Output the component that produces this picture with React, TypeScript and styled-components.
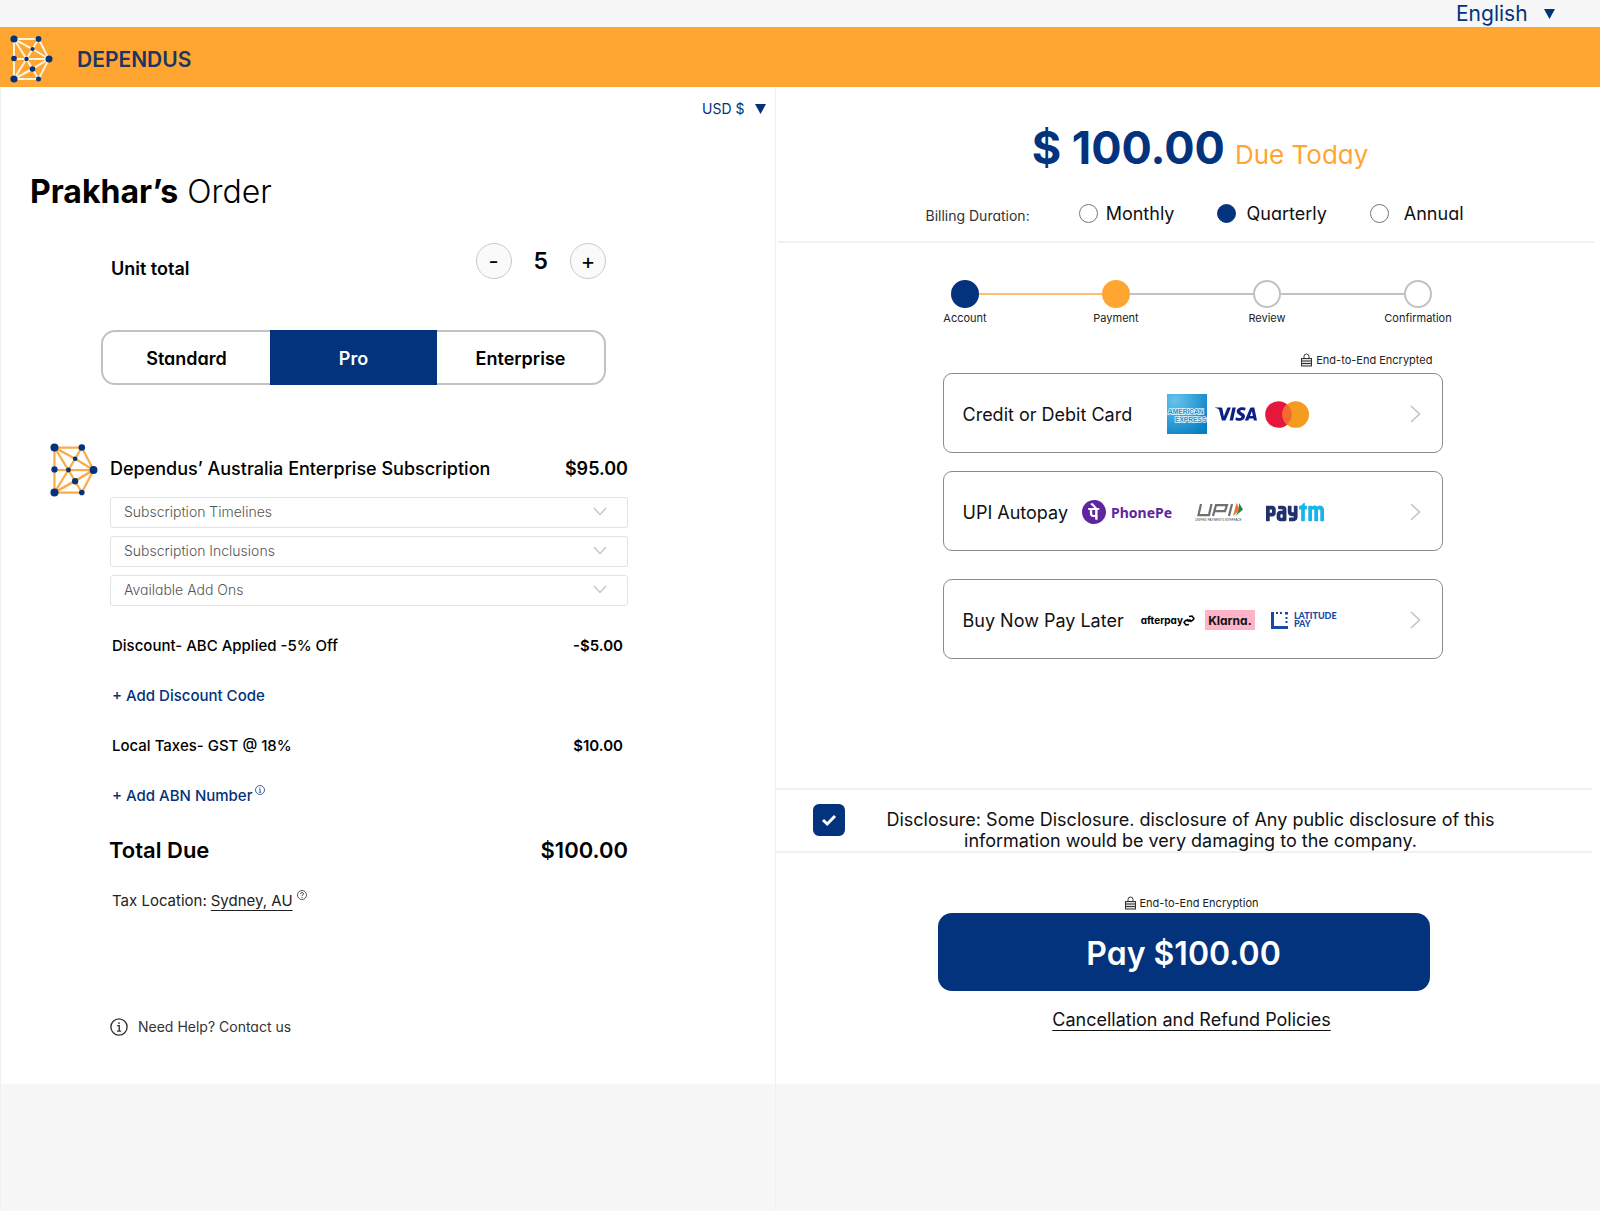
import React, { useState } from "react";
import styled, { createGlobalStyle, css } from "styled-components";
import { SiVisa, SiPaytm, SiPhonepe } from "react-icons/si";

const navy = "#03337c";
const orange = "#ffa632";
const line = "#f1f1f1";

const Global = createGlobalStyle`
  *, *::before, *::after { box-sizing: border-box; }
  body {
    margin: 0;
    background: #f7f7f7;
    color: #111;
    font-family: Inter, "Liberation Sans", sans-serif;
    font-size: 16px;
  }
  button, select, input { font: inherit; color: inherit; margin: 0; }
  button { cursor: pointer; }
  h1, h2, p, ol { margin: 0; padding: 0; }
`;

const alternateA = css`
  font-feature-settings: "cv11" 1;
`;

const UtilityBar = styled.div`
  display: flex;
  justify-content: flex-end;
  height: 27px;
  padding-right: 45px;
`;

const Picker = styled.label<{ $size: number; $gap: number }>`
  display: flex;
  align-items: center;
  gap: ${(p) => p.$gap}px;
  color: ${navy};
  font-size: ${(p) => p.$size}px;
`;

const PlainSelect = styled.select`
  appearance: none;
  border: 0;
  padding: 0;
  background: transparent;
  line-height: 27px;
`;

const Header = styled.header`
  display: flex;
  align-items: center;
  gap: 24px;
  height: 60px;
  padding: 3px 10px 0;
  background: ${orange};
`;

const BrandName = styled.span`
  padding-top: 3px;
  color: #1c3563;
  font-size: 21px;
  font-weight: 600;
  line-height: 28px;
`;

const Main = styled.main`
  display: grid;
  grid-template-columns: 31fr 33fr;
  min-height: calc(100vh - 87px);
`;

const Column = styled.div`
  border-left: 1px solid ${line};
`;

const Panel = styled.section`
  display: flex;
  flex-direction: column;
  min-height: 997px;
  background: #fff;
`;

const OrderPanel = styled(Panel)`
  padding: 8px 9px 40px 29px;
`;

const CurrencyRow = styled.div`
  display: flex;
  justify-content: flex-end;
`;

const OrderTitle = styled.h1`
  margin-top: 50px;
  color: #000;
  font-size: 32px;
  font-weight: 300;
  line-height: 40px;
  strong { font-weight: 700; }
`;

const UnitRow = styled.div`
  display: flex;
  align-items: center;
  justify-content: space-between;
  width: 495px;
  margin: 31px 0 0 81px;
`;

const UnitLabel = styled.span`
  padding-top: 14px;
  color: #000;
  font-size: 18px;
  font-weight: 600;
`;

const Stepper = styled.div`
  display: flex;
  align-items: center;
  gap: 22px;
`;

const RoundButton = styled.button`
  display: grid;
  place-items: center;
  width: 36px;
  height: 36px;
  padding: 0;
  border: 1px solid #c9c9c9;
  border-radius: 50%;
  background: #fafafa;
  color: #000;
  font-size: 22px;
  line-height: 34px;
`;

const Quantity = styled.output`
  color: #000;
  font-size: 23px;
  font-weight: 600;
  line-height: 29px;
`;

const PlanGroup = styled.div`
  display: grid;
  grid-template-columns: repeat(3, 1fr);
  width: 505px;
  height: 55px;
  margin: 51px 0 0 71px;
  border: 2px solid #c2c2c2;
  border-radius: 14px;
`;

const PlanButton = styled.button<{ $active: boolean }>`
  ${alternateA}
  margin: ${(p) => (p.$active ? "-2px 0" : "0")};
  padding: 2px 0 0;
  border: 0;
  background: ${(p) => (p.$active ? navy : "transparent")};
  color: ${(p) => (p.$active ? "#fff" : "#000")};
  font-size: 18px;
  font-weight: 600;
`;

const Subscription = styled.div`
  display: grid;
  grid-template-columns: 46px 518px;
  column-gap: 14px;
  margin: 58px 0 0 20px;
`;

const ProductHead = styled.div`
  display: flex;
  align-items: center;
  justify-content: space-between;
  height: 50px;
  color: #000;
  font-size: 18px;
`;

const ProductName = styled.h2`
  font-size: 18px;
  font-weight: 500;
`;

const Price = styled.span`
  font-weight: 600;
`;

const Accordions = styled.div`
  display: grid;
  grid-column: 2;
  gap: 8px;
`;

const AccordionButton = styled.button`
  ${alternateA}
  display: flex;
  align-items: center;
  justify-content: space-between;
  height: 31px;
  padding: 0 20px 2px 13px;
  border: 1px solid #e2e2e2;
  border-radius: 3px;
  background: #fff;
  color: #555;
  font-size: 14px;
  font-weight: 300;
`;

const Charges = styled.div`
  display: grid;
  grid-auto-rows: 50px;
  width: 511px;
  margin: 14px 0 0 82px;
`;

const ChargeRow = styled.div`
  display: flex;
  align-items: center;
  justify-content: space-between;
  color: #000;
  font-size: 15px;
  font-weight: 500;
`;

const LinkButton = styled.button`
  display: flex;
  align-items: center;
  gap: 3px;
  padding: 0;
  border: 0;
  background: transparent;
  color: ${navy};
  font-size: 15px;
  font-weight: 500;
  svg { margin-bottom: 10px; }
`;

const TotalRow = styled.div`
  display: flex;
  align-items: center;
  justify-content: space-between;
  width: 519px;
  height: 60px;
  margin-left: 79px;
  color: #000;
  font-size: 22px;
  font-weight: 600;
`;

const TaxRow = styled.p`
  display: flex;
  align-items: center;
  gap: 4px;
  height: 40px;
  margin-left: 82px;
  color: #222;
  font-size: 15px;
  svg { margin-bottom: 10px; }
`;

const UnderlinedLink = styled.a`
  color: inherit;
  text-decoration: underline;
  text-decoration-thickness: 1px;
  text-underline-offset: 4px;
`;

const HelpLink = styled.a`
  ${alternateA}
  display: flex;
  align-items: center;
  gap: 10px;
  margin: 97px 0 0 80px;
  color: #333;
  font-size: 14px;
  line-height: 20px;
  text-decoration: none;
`;

const PaymentPanel = styled(Panel)`
  align-items: center;
`;

const DueLine = styled.p`
  ${alternateA}
  display: flex;
  align-items: baseline;
  gap: 10px;
  height: 62px;
  margin-top: 33px;
  padding-left: 24px;
  color: ${orange};
  font-size: 26px;
  font-weight: 400;
  line-height: 56px;
  strong { color: ${navy}; font-size: 45px; font-weight: 700; }
`;

const BillingRow = styled.div`
  ${alternateA}
  display: flex;
  align-items: center;
  justify-content: center;
  align-self: stretch;
  height: 61px;
  margin: 0 6px 0 2px;
  padding: 8px 0 4px 17px;
  border-bottom: 2px solid ${line};
`;

const BillingLabel = styled.span`
  margin-right: 49px;
  padding-top: 3px;
  color: #333;
  font-size: 14px;
`;

const RadioLabel = styled.label<{ $gap: number }>`
  display: flex;
  align-items: center;
  gap: ${(p) => p.$gap}px;
  color: #111;
  font-size: 18px;
  & + & { margin-left: 43px; }
`;

const Radio = styled.input`
  appearance: none;
  width: 19px;
  height: 19px;
  border: 1px solid #777;
  border-radius: 50%;
  background: #fff;
  &:checked { border-color: ${navy}; background: ${navy}; }
`;

const Steps = styled.ol`
  display: grid;
  grid-template-columns: repeat(4, 151px);
  margin-top: 37px;
  padding-left: 7px;
  list-style: none;
`;

const Step = styled.li`
  display: grid;
  justify-items: center;
  gap: 3px;
  color: #222;
  font-size: 11px;
  line-height: 14px;
`;

const StepTrack = styled.span<{ $before: string; $after: string }>`
  display: grid;
  grid-template-columns: 1fr 28px 1fr;
  align-items: center;
  width: 100%;
  &::before, &::after { content: ""; height: 2px; }
  &::before { background: ${(p) => p.$before}; }
  &::after { background: ${(p) => p.$after}; }
`;

const StepDot = styled.span<{ $fill: string; $ring: string }>`
  height: 28px;
  border: 2px solid ${(p) => p.$ring};
  border-radius: 50%;
  background: ${(p) => p.$fill};
`;

const Methods = styled.div`
  display: flex;
  flex-direction: column;
  width: 500px;
  margin: 25px 0 0 9px;
`;

const Encrypted = styled.p`
  display: flex;
  align-items: center;
  justify-content: center;
  gap: 4px;
  padding: 2px 0 0 16px;
  color: #222;
  font-size: 11px;
  line-height: 20px;
`;

const EncryptedRight = styled(Encrypted)`
  justify-content: flex-end;
  padding: 0 10px 3px 0;
`;

const MethodButton = styled.button<{ $top: number }>`
  display: flex;
  align-items: center;
  height: 80px;
  margin-top: ${(p) => p.$top}px;
  padding: 2px 21px 0 19px;
  border: 1px solid #8b8b8b;
  border-radius: 9px;
  background: #fff;
  color: #111;
  font-size: 18px;
`;

const Logos = styled.span<{ $left: number; $gap: number }>`
  display: flex;
  flex: 1;
  align-items: center;
  gap: ${(p) => p.$gap}px;
  margin-left: ${(p) => p.$left}px;
`;

const VisaMark = styled(SiVisa)`
  width: 42px;
  height: 42px;
  fill: #0b1f86;
`;

const PaytmMark = styled(SiPaytm)`
  width: 58px;
  height: 58px;
  fill: url(#paytm-tones);
`;

const PhonePeMark = styled.span`
  display: flex;
  align-items: center;
  gap: 5px;
  color: #5f259f;
  font-family: "Noto Sans", sans-serif;
  font-size: 14px;
  font-weight: 700;
`;

const AfterpayMark = styled.span`
  ${alternateA}
  display: flex;
  align-items: center;
  color: #000;
  font-size: 10px;
  font-weight: 700;
`;

const KlarnaMark = styled.span`
  ${alternateA}
  display: grid;
  place-items: center;
  width: 50px;
  height: 20px;
  background: #ffb3c7;
  color: #17120f;
  font-size: 12px;
  font-weight: 700;
`;

const LatitudeMark = styled.span`
  display: flex;
  align-items: center;
  gap: 6px;
  padding-left: 6px;
  color: #1649a8;
  font-family: Lato, sans-serif;
  font-size: 9px;
  font-weight: 900;
  line-height: 8px;
  text-align: left;
`;

const Disclosure = styled.label`
  display: flex;
  align-self: stretch;
  gap: 36px;
  height: 65px;
  margin: 129px 8px 0 0;
  padding: 14px 92px 0 37px;
  border: solid ${line};
  border-width: 2px 0;
  color: #111;
  font-size: 18px;
  line-height: 21px;
  text-align: center;
`;

const CheckHolder = styled.span`
  display: grid;
  place-items: center;
  width: 32px;
  height: 32px;
  > * { grid-area: 1 / 1; }
  svg { pointer-events: none; }
`;

const CheckBox = styled.input`
  appearance: none;
  width: 32px;
  height: 32px;
  border: 2px solid ${navy};
  border-radius: 6px;
  background: #fff;
  &:checked { background: ${navy}; }
`;

const DisclosureText = styled.span`
  flex: 1;
  padding-top: 5px;
`;

const PayArea = styled.div`
  display: flex;
  flex-direction: column;
  width: 492px;
  margin: 38px 9px 0 0;
`;

const PayButton = styled.button`
  ${alternateA}
  height: 78px;
  padding: 2px 0 0;
  border: 0;
  border-radius: 14px;
  background: ${navy};
  color: #fff;
  font-size: 32px;
  font-weight: 600;
`;

const PolicyLine = styled.p`
  margin-top: 17px;
  padding-left: 16px;
  font-size: 18px;
  line-height: 24px;
  text-align: center;
`;

function Logo({ width, height, stroke }: { width: number; height: number; stroke: string }) {
  return (
    <svg width={width} height={height} viewBox="0 0 43 48" preserveAspectRatio="none" role="img" aria-label="Dependus">
      <path
        d="M4 4H28.500L39 24L28.500 44H4V4L22.500 14L39 24L4 44M28.500 4L22.500 14L16.500 24L4 4M4 24H39M4 44L16.500 24L22.500 34L28.500 44M22.500 34L39 24M4 44L22.500 34"
        fill="none"
        stroke={stroke}
        strokeWidth="2"
      />
      <g fill={navy}>
        <circle cx="4" cy="4" r="3.600" />
        <circle cx="28.500" cy="4" r="2.900" />
        <circle cx="22.500" cy="14" r="2.100" />
        <circle cx="39" cy="24" r="3.500" />
        <circle cx="4" cy="23.500" r="2.800" />
        <circle cx="16.500" cy="24" r="2.200" />
        <circle cx="22.500" cy="34" r="2.800" />
        <circle cx="4" cy="44" r="3.600" />
        <circle cx="28.500" cy="44" r="2.500" />
      </g>
    </svg>
  );
}

function Triangle() {
  return (
    <svg width="11" height="10" viewBox="0 0 11 10" aria-hidden="true">
      <path d="M0 0H11L5.500 10Z" fill={navy} />
    </svg>
  );
}

function Chevron({ down = false }: { down?: boolean }) {
  return down ? (
    <svg width="14" height="9" viewBox="0 0 14 9" aria-hidden="true">
      <path d="M1 1L7 7.500L13 1" fill="none" stroke="#c4c4c4" strokeWidth="1.300" />
    </svg>
  ) : (
    <svg width="11" height="18" viewBox="0 0 11 18" aria-hidden="true">
      <path d="M1 1L9.500 9L1 17" fill="none" stroke="#c4c4c4" strokeWidth="1.600" />
    </svg>
  );
}

function InfoIcon({ size, help = false }: { size: number; help?: boolean }) {
  return (
    <svg width={size} height={size} viewBox="0 0 20 20" fill="none" stroke="currentColor" strokeWidth="1.500" aria-hidden="true">
      <circle cx="10" cy="10" r="9" />
      {help ? (
        <path d="M7 8Q7 5 10 5T13 8Q13 9.500 10 11V12.500M10 14V16" />
      ) : (
        <path d="M8 8.500H10.300V14.500M7.800 14.500H12.500M10 4.800V6.600" />
      )}
    </svg>
  );
}

function Lock() {
  return (
    <svg width="11" height="14" viewBox="0 0 11 14" aria-hidden="true">
      <path d="M3 6V3.500Q3 1 5.500 1T8 3.500V6" fill="none" stroke="#333" />
      <rect x="0.500" y="5.500" width="10" height="7.500" fill="#ddd" stroke="#333" />
      <path d="M1 8H10M1 10.500H10" stroke="#333" />
    </svg>
  );
}

function Amex() {
  return (
    <svg width="40" height="40" viewBox="0 0 40 40" role="img" aria-label="American Express">
      <defs>
        <radialGradient id="amex-sheen" cx="0.2" cy="0.15" r="1">
          <stop offset="0" stopColor="#66c3ec" />
          <stop offset="1" stopColor="#087fc4" />
        </radialGradient>
      </defs>
      <rect width="40" height="40" fill="url(#amex-sheen)" />
      <g fill="#2292d0" stroke="#e8f6fd" strokeWidth="1.600" paintOrder="stroke" fontFamily="Liberation Sans, sans-serif" fontWeight="700" fontSize="6.600">
        <text x="1" y="20">AMERICAN</text>
        <text x="8" y="28">EXPRESS</text>
      </g>
    </svg>
  );
}

function Mastercard() {
  return (
    <svg width="44" height="27" viewBox="0 0 44 27" role="img" aria-label="Mastercard">
      <circle cx="13.500" cy="13.500" r="13.300" fill="#e6173d" />
      <circle cx="30.700" cy="13.500" r="13.300" fill="#f59b20" />
      <path d="M22.100 3.400A13.300 13.300 0 0 1 22.100 23.600A13.300 13.300 0 0 1 22.100 3.400" fill="#f26a30" />
    </svg>
  );
}

function Upi() {
  return (
    <svg width="48" height="20" viewBox="0 0 96 40" role="img" aria-label="UPI Unified Payments Interface">
      <path d="M12 4L7 26H28L33 4M36 28L42 6H64L60 18H40M74 4L68 28" fill="none" stroke="#6f7072" strokeWidth="4.500" />
      <path d="M83 2L90 15L76 28Z" fill="#e9762c" />
      <path d="M88 2L96 15L81 28L88 15Z" fill="#16875a" />
      <text x="0" y="37" fontFamily="Liberation Sans, sans-serif" fontSize="6" fill="#444">UNIFIED PAYMENTS INTERFACE</text>
    </svg>
  );
}

function AfterpayLoop() {
  return (
    <svg width="12" height="11" viewBox="0 0 12 11" fill="none" stroke="#000" strokeWidth="1.500" aria-hidden="true">
      <path d="M6 9.500L3 10L1 7.500L2.500 5.500L7 5L8.500 7M6 1.500L9 1L11 3.500L9.500 5.500L5 6L4 4" />
    </svg>
  );
}

function LatitudeFrame() {
  return (
    <svg width="17" height="17" viewBox="0 0 17 17" fill="#1649a8" aria-hidden="true">
      <path d="M0 0H3V14H17V17H0Z" />
      <path d="M5 0h2v2H5zM9 0h2v2H9zM14 0h3v2.500h-3zM14.500 5h2v2h-2zM14.500 9h2v2h-2z" />
    </svg>
  );
}

function PaytmTones() {
  return (
    <svg width="0" height="0" aria-hidden="true">
      <linearGradient id="paytm-tones">
        <stop offset="0.57" stopColor="#22306b" />
        <stop offset="0.57" stopColor="#14b4ec" />
      </linearGradient>
    </svg>
  );
}

const plans = ["Standard", "Pro", "Enterprise"];
const sections = ["Subscription Timelines", "Subscription Inclusions", "Available Add Ons"];
const durations = [
  { name: "Monthly", gap: 8 },
  { name: "Quarterly", gap: 10 },
  { name: "Annual", gap: 15 },
];
const grey = "#c2c2c2";
const steps = [
  { name: "Account", fill: navy, ring: navy, before: "transparent", after: "#f9c06d" },
  { name: "Payment", fill: orange, ring: orange, before: "#f9c06d", after: grey },
  { name: "Review", fill: "#fff", ring: grey, before: grey, after: grey },
  { name: "Confirmation", fill: "#fff", ring: grey, before: grey, after: "transparent" },
];

export default function App() {
  const [plan, setPlan] = useState("Pro");
  const [units, setUnits] = useState(5);
  const [duration, setDuration] = useState("Quarterly");
  const [agreed, setAgreed] = useState(true);

  return (
    <>
      <Global />
      <UtilityBar>
        <Picker $size={21} $gap={16}>
          <PlainSelect aria-label="Language">
            <option>English</option>
          </PlainSelect>
          <Triangle />
        </Picker>
      </UtilityBar>
      <Header>
        <Logo width={43} height={48} stroke="#fff3dc" />
        <BrandName>DEPENDUS</BrandName>
      </Header>
      <Main>
        <Column>
          <OrderPanel>
            <CurrencyRow>
              <Picker $size={14} $gap={10}>
                <PlainSelect aria-label="Currency">
                  <option>USD $</option>
                </PlainSelect>
                <Triangle />
              </Picker>
            </CurrencyRow>
            <OrderTitle>
              <strong>Prakhar’s</strong> Order
            </OrderTitle>
            <UnitRow>
              <UnitLabel>Unit total</UnitLabel>
              <Stepper>
                <RoundButton aria-label="Remove a unit" onClick={() => setUnits(Math.max(1, units - 1))}>-</RoundButton>
                <Quantity>{units}</Quantity>
                <RoundButton aria-label="Add a unit" onClick={() => setUnits(units + 1)}>+</RoundButton>
              </Stepper>
            </UnitRow>
            <PlanGroup role="group" aria-label="Plan">
              {plans.map((name) => (
                <PlanButton key={name} $active={plan === name} aria-pressed={plan === name} onClick={() => setPlan(name)}>
                  {name}
                </PlanButton>
              ))}
            </PlanGroup>
            <Subscription>
              <Logo width={48} height={54} stroke="#f9ac48" />
              <ProductHead>
                <ProductName>Dependus’ Australia Enterprise Subscription</ProductName>
                <Price>$95.00</Price>
              </ProductHead>
              <Accordions>
                {sections.map((name) => (
                  <AccordionButton key={name} aria-expanded={false}>
                    {name}
                    <Chevron down />
                  </AccordionButton>
                ))}
              </Accordions>
            </Subscription>
            <Charges>
              <ChargeRow>
                <span>Discount- ABC Applied -5% Off</span>
                <Price>-$5.00</Price>
              </ChargeRow>
              <LinkButton>+ Add Discount Code</LinkButton>
              <ChargeRow>
                <span>Local Taxes- GST @ 18%</span>
                <Price>$10.00</Price>
              </ChargeRow>
              <LinkButton>
                + Add ABN Number
                <InfoIcon size={10} />
              </LinkButton>
            </Charges>
            <TotalRow>
              <span>Total Due</span>
              <Price>$100.00</Price>
            </TotalRow>
            <TaxRow>
              Tax Location: <UnderlinedLink href="#location">Sydney, AU</UnderlinedLink>
              <InfoIcon size={10} help />
            </TaxRow>
            <HelpLink href="#help">
              <InfoIcon size={18} />
              Need Help? Contact us
            </HelpLink>
          </OrderPanel>
        </Column>
        <Column>
          <PaymentPanel>
            <DueLine>
              <strong>$ 100.00</strong>
              <span>Due Today</span>
            </DueLine>
            <BillingRow role="radiogroup" aria-label="Billing Duration">
              <BillingLabel>Billing Duration:</BillingLabel>
              {durations.map(({ name, gap }) => (
                <RadioLabel key={name} $gap={gap}>
                  <Radio type="radio" name="duration" checked={duration === name} onChange={() => setDuration(name)} />
                  {name}
                </RadioLabel>
              ))}
            </BillingRow>
            <Steps>
              {steps.map((s) => (
                <Step key={s.name}>
                  <StepTrack $before={s.before} $after={s.after}>
                    <StepDot $fill={s.fill} $ring={s.ring} />
                  </StepTrack>
                  {s.name}
                </Step>
              ))}
            </Steps>
            <Methods>
              <EncryptedRight>
                <Lock />
                End-to-End Encrypted
              </EncryptedRight>
              <MethodButton $top={0}>
                Credit or Debit Card
                <Logos $left={35} $gap={8}>
                  <Amex />
                  <VisaMark title="Visa" />
                  <Mastercard />
                </Logos>
                <Chevron />
              </MethodButton>
              <MethodButton $top={18}>
                UPI Autopay
                <PaytmTones />
                <Logos $left={14} $gap={23}>
                  <PhonePeMark>
                    <SiPhonepe size={24} />
                    PhonePe
                  </PhonePeMark>
                  <Upi />
                  <PaytmMark title="Paytm" />
                </Logos>
                <Chevron />
              </MethodButton>
              <MethodButton $top={28}>
                Buy Now Pay Later
                <Logos $left={17} $gap={10}>
                  <AfterpayMark>
                    afterpay
                    <AfterpayLoop />
                  </AfterpayMark>
                  <KlarnaMark>Klarna.</KlarnaMark>
                  <LatitudeMark>
                    <LatitudeFrame />
                    <span>
                      LATITUDE
                      <br />
                      PAY
                    </span>
                  </LatitudeMark>
                </Logos>
                <Chevron />
              </MethodButton>
            </Methods>
            <Disclosure>
              <CheckHolder>
                <CheckBox type="checkbox" checked={agreed} onChange={() => setAgreed(!agreed)} />
                <svg width="16" height="14" viewBox="0 0 16 14" aria-hidden="true">
                  <path d="M2 7L6.200 11L14 3" fill="none" stroke="#fff" strokeWidth="3" />
                </svg>
              </CheckHolder>
              <DisclosureText>
                Disclosure: Some Disclosure. disclosure of Any public disclosure of this information would be very
                damaging to the company.
              </DisclosureText>
            </Disclosure>
            <PayArea>
              <Encrypted>
                <Lock />
                End-to-End Encryption
              </Encrypted>
              <PayButton>Pay $100.00</PayButton>
              <PolicyLine>
                <UnderlinedLink href="#policies">Cancellation and Refund Policies</UnderlinedLink>
              </PolicyLine>
            </PayArea>
          </PaymentPanel>
        </Column>
      </Main>
    </>
  );
}
